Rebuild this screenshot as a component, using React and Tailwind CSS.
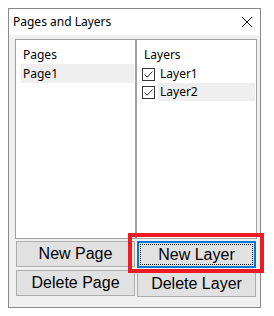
import React from "react";

const ui = { fontFamily: '"Noto Sans", "Open Sans", sans-serif' };
const btnFont = { fontFamily: '"Liberation Sans", Arial, sans-serif' };

function Check() {
  return (
    <span className="flex h-[13px] w-[13px] shrink-0 items-center justify-center border border-[#333333] bg-white">
      <svg width="11" height="11" viewBox="0 0 11 11">
        <path d="M1.5 5.5 L4.2 8.2 L9.5 2.5" fill="none" stroke="#222" strokeWidth="1" />
      </svg>
    </span>
  );
}

function Button({ children, focused }) {
  if (focused) {
    return (
      <div className="flex h-[27px] items-center justify-center border-2 border-[#0078d7] bg-[#e1e1e1] p-[1px]">
        <div className="flex h-full w-full items-center justify-center border border-dotted border-black text-[16px] text-black" style={btnFont}>
          {children}
        </div>
      </div>
    );
  }
  return (
    <div className="flex h-[26px] items-center justify-center border border-[#adadad] bg-[#e1e1e1] text-[16px] text-black" style={btnFont}>
      {children}
    </div>
  );
}

export default function App() {
  return (
    <div className="relative h-[316px] w-[274px] bg-white" style={ui}>
      <div className="absolute left-[8px] top-[8px] flex h-[300px] w-[253px] flex-col border border-[#8a8a8a] bg-[#f0f0f0]">
        <div className="flex h-[26px] items-center justify-between bg-white pl-[4px] pr-[7px] text-[12px] text-black">
          <span>Pages and Layers</span>
          <svg width="12" height="12" viewBox="0 0 12 12">
            <path d="M1 1 L11 11 M11 1 L1 11" stroke="#111" strokeWidth="1" />
          </svg>
        </div>
        <div className="flex pl-[6px] pt-[4px]">
          <div className="flex w-[121px] flex-col">
            <div className="h-[200px] border border-[#a0a0a0] bg-white text-[12px] text-black">
              <div className="pl-[7px] pt-[6px] leading-[18px]">Pages</div>
              <div className="ml-[5px] mr-[1px] bg-[#efefef] pl-[2px] leading-[19px]">Page1</div>
            </div>
            <div className="mx-[1px] mt-[2px] flex flex-col gap-[3px]">
              <Button>New Page</Button>
              <Button>Delete Page</Button>
            </div>
          </div>
          <div className="flex w-[121px] flex-col">
            <div className="h-[200px] border border-[#a0a0a0] bg-white text-[12px] text-black">
              <div className="pl-[7px] pt-[6px] leading-[18px]">Layers</div>
              <div className="ml-[5px] mt-[1px] flex items-center gap-[4px] leading-[18px]">
                <Check />
                <span className="pl-[1px]">Layer1</span>
              </div>
              <div className="ml-[5px] mr-[1px] flex items-center gap-[3px] leading-[18px]">
                <Check />
                <span className="flex-1 bg-[#efefef] pl-[2px]">Layer2</span>
              </div>
            </div>
            <div className="mx-[1px] mt-[2px] flex flex-col gap-[3px]">
              <Button focused>New Layer</Button>
              <Button>Delete Layer</Button>
            </div>
          </div>
        </div>
      </div>
      <div className="absolute left-[128px] top-[233px] h-[40px] w-[136px] border-[4px] border-[#ed1c24]" />
    </div>
  );
}
